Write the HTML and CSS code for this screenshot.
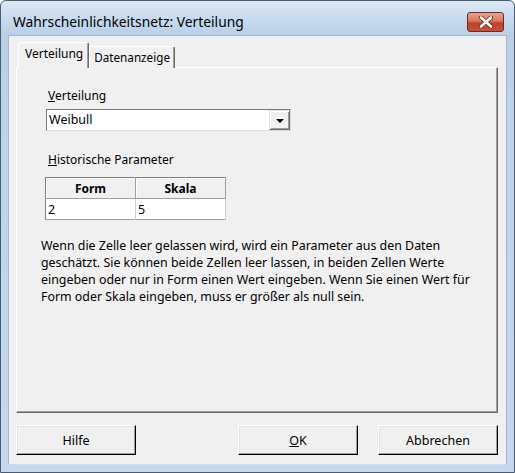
FILE: index.html
```html
<!DOCTYPE html>
<html>
<head>
<meta charset="utf-8">
<link rel="stylesheet" href="styles.css">
</head>
<body>
<div class="window">
  <div class="titlebar">
    <span class="title">Wahrscheinlichkeitsnetz: Verteilung</span>
    <div class="close">
      <svg width="16" height="12" viewBox="0 0 16 12">
        <path d="M3 1.5 L13 10.5 M13 1.5 L3 10.5" stroke="#5a2a22" stroke-width="4.2" stroke-linecap="round"/>
        <path d="M3 1.5 L13 10.5 M13 1.5 L3 10.5" stroke="#ffffff" stroke-width="2.6" stroke-linecap="round"/>
      </svg>
    </div>
  </div>
  <div class="client">
    <div class="tabs">
      <div class="tab active">Verteilung</div>
      <div class="tab">Datenanzeige</div>
    </div>
    <div class="panel">
      <div class="label"><u>V</u>erteilung</div>
      <div class="combo">
        <span class="combo-text">Weibull</span>
        <div class="combo-btn"><span class="arrow"></span></div>
      </div>
      <div class="label label2"><u>H</u>istorische Parameter</div>
      <table class="grid">
        <tr><th>Form</th><th>Skala</th></tr>
        <tr><td>2</td><td>5</td></tr>
      </table>
      <p class="info">Wenn die Zelle leer gelassen wird, wird ein Parameter aus den Daten geschätzt. Sie können beide Zellen leer lassen, in beiden Zellen Werte eingeben oder nur in Form einen Wert eingeben. Wenn Sie einen Wert für Form oder Skala eingeben, muss er größer als null sein.</p>
    </div>
    <div class="buttons">
      <div class="btn">Hilfe</div>
      <div class="spacer"></div>
      <div class="btn"><u>O</u>K</div>
      <div class="btn">Abbrechen</div>
    </div>
  </div>
</div>
</body>
</html>
```
FILE: styles.css
```css
html, body {
  margin: 0;
  padding: 0;
  background: #ffffff;
}
body {
  font-family: "Noto Sans", "Open Sans", sans-serif;
  font-size: 12px;
  color: #000;
}
.window {
  width: 515px;
  height: 473px;
  box-sizing: border-box;
  border: 1px solid #4a5b70;
  border-radius: 6px 6px 0 0;
  background: linear-gradient(to bottom, #dce8f5 0px, #c6d9ee 20px, #b9cfe8 34px, #bcd3ec 100px, #c4d9ef 473px);
  display: flex;
  flex-direction: column;
}
.titlebar {
  height: 34px;
  display: flex;
  align-items: flex-start;
  position: relative;
}
.title {
  margin-left: 12px;
  margin-top: 11px;
  font-size: 13.8px;
  line-height: 20px;
  color: #000;
}
.close {
  position: absolute;
  right: 10px;
  top: 11px;
  width: 37px;
  height: 20px;
  box-sizing: border-box;
  border: 1px solid #6b2a22;
  border-radius: 3px;
  background: linear-gradient(to bottom, #e8a493 0%, #d7775f 45%, #c0402a 55%, #c9503a 100%);
  display: flex;
  align-items: center;
  justify-content: center;
}
.client {
  margin: 0 7px;
  height: 430px;
  box-sizing: border-box;
  background: #f0f0f0;
  border: 1px solid #a3b6cc;
  border-bottom-color: #d0deec;
  padding: 7px 8px 0 7px;
  display: flex;
  flex-direction: column;
}
.tabs {
  display: flex;
  align-items: flex-end;
  height: 25px;
  padding-left: 2px;
  position: relative;
  z-index: 2;
  margin-bottom: -1px;
}
.tab {
  height: 22px;
  box-sizing: border-box;
  padding: 0 4px;
  line-height: 21px;
  background: #f0f0f0;
  border-top: 1px solid #ffffff;
  border-left: 1px solid #ffffff;
  border-right: 1px solid #696969;
  box-shadow: inset -1px 0 0 #a0a0a0;
  border-radius: 2px 2px 0 0;
  font-size: 11.7px;
}
.tab.active {
  height: 26px;
  padding: 0 5px 0 6px;
  line-height: 22px;
  font-size: 12px;
}
.panel {
  height: 346px;
  box-sizing: border-box;
  border-top: 1px solid #ffffff;
  border-left: 1px solid #ffffff;
  border-right: 1px solid #696969;
  border-bottom: 1px solid #696969;
  box-shadow: inset -1px -1px 0 #a0a0a0;
  padding: 20px 0 0 24px;
}
.label {
  margin-left: 7px;
  line-height: 15px;
  height: 15px;
}
.label2 {
  margin-top: 21px;
}
.combo {
  margin-top: 6px;
  margin-left: 5px;
  width: 245px;
  height: 22px;
  box-sizing: border-box;
  background: #ffffff;
  border-top: 1px solid #7a7a7a;
  border-left: 1px solid #7a7a7a;
  border-right: 1px solid #dcdcdc;
  border-bottom: 1px solid #dcdcdc;
  display: flex;
  align-items: center;
  justify-content: space-between;
  padding-left: 2px;
}
.combo-text {
  line-height: 18px;
  font-size: 12.5px;
}
.combo-btn {
  width: 21px;
  height: 20px;
  box-sizing: border-box;
  background: #f0f0f0;
  border-top: 1px solid #e3e3e3;
  border-left: 1px solid #e3e3e3;
  border-right: 1px solid #696969;
  border-bottom: 1px solid #696969;
  box-shadow: inset 1px 1px 0 #ffffff, inset -1px -1px 0 #a0a0a0;
  display: flex;
  align-items: center;
  justify-content: center;
}
.arrow {
  width: 0;
  height: 0;
  border-left: 4px solid transparent;
  border-right: 4px solid transparent;
  border-top: 4px solid #000;
  margin-top: 1px;
}
.grid {
  margin-top: 10px;
  margin-left: 4px;
  border-collapse: collapse;
  border: 1px solid #a0a0a0;
  border-top-color: #808080;
  border-left-color: #808080;
  background: #ffffff;
}
.grid th {
  width: 90px;
  height: 21px;
  box-sizing: border-box;
  padding: 0;
  background: #f0f0f0;
  font-weight: bold;
  font-size: 12px;
  border-right: 1px solid #a0a0a0;
  border-bottom: 1px solid #a0a0a0;
  box-shadow: inset 1px 1px 0 #ffffff;
  text-align: center;
}
.grid td {
  height: 21px;
  box-sizing: border-box;
  padding: 0 0 0 2px;
  border-right: 1px solid #d0d0d0;
  font-size: 12.5px;
}
.info {
  margin: 17px 0 0 0;
  width: 450px;
  line-height: 17px;
  font-size: 12.4px;
}
.buttons {
  display: flex;
  margin-top: 12px;
  gap: 20px;
}
.spacer {
  flex: 1;
}
.btn {
  width: 120px;
  height: 30px;
  box-sizing: border-box;
  background: #f0f0f0;
  border-top: 1px solid #ffffff;
  border-left: 1px solid #ffffff;
  border-right: 1px solid #000000;
  border-bottom: 1px solid #000000;
  box-shadow: inset -1px -1px 0 #a0a0a0, inset 1px 1px 0 #e3e3e3;
  display: flex;
  align-items: center;
  justify-content: center;
  font-size: 12.5px;
}
```
